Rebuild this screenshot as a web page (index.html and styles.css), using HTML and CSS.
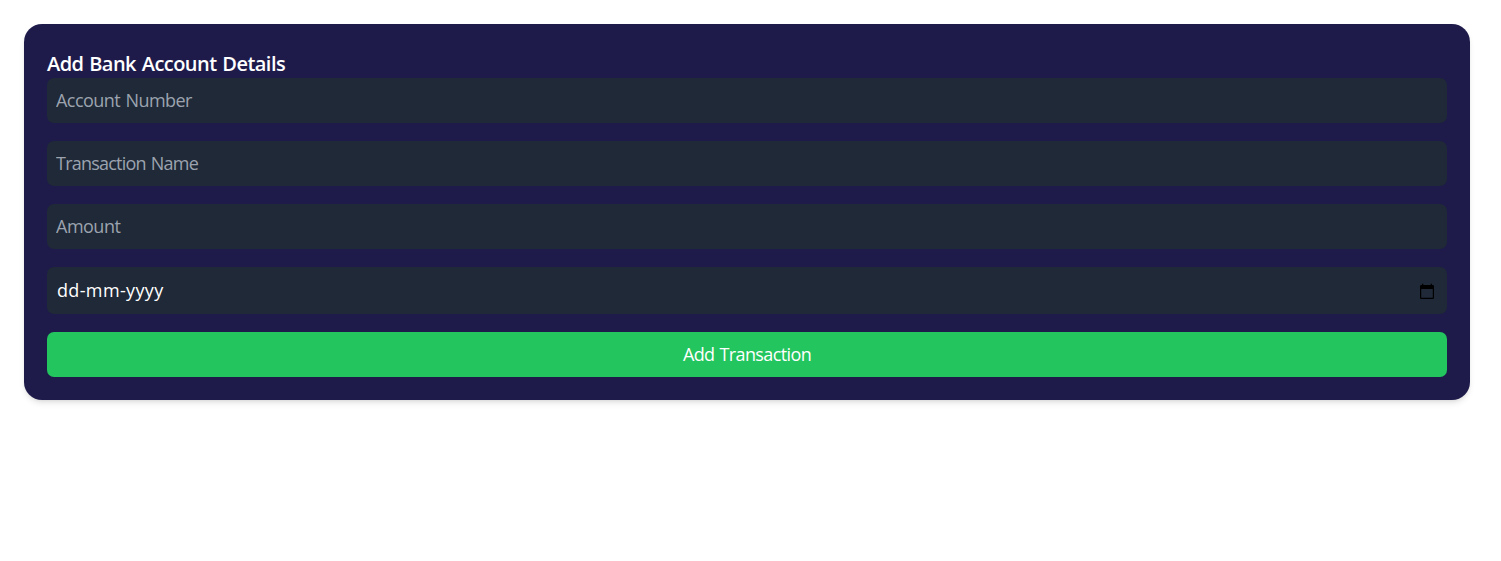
FILE: index.html
```html
<!DOCTYPE html>
<html lang="en">
<head>
<meta charset="utf-8">
<title>Add Bank Account Details</title>
<link rel="stylesheet" href="styles.css">
</head>
<body>
<form class="card">
  <h2 class="title"><span class="title-text">Add Bank Account Details</span></h2>
  <input class="field account" type="text" placeholder="Account Number">
  <input class="field name" type="text" placeholder="Transaction Name">
  <input class="field amount" type="text" placeholder="Amount">
  <div class="field date">
    <span class="date-text">dd-mm-yyyy</span>
    <svg class="calendar" viewBox="0 0 18 18" aria-hidden="true">
      <path fill="#000" fill-rule="evenodd" d="M4 .7h1.3V2h7.4V.7H14V2h.8a1.2 1.2 0 0 1 1.2 1.2v11.6a1.2 1.2 0 0 1-1.2 1.2H3.2A1.2 1.2 0 0 1 2 14.8V3.2A1.2 1.2 0 0 1 3.2 2H4zM3.2 6v8.800h11.600V6z"/>
    </svg>
  </div>
  <button class="submit" type="button">Add Transaction</button>
</form>
</body>
</html>
```
FILE: styles.css
```css
* {
  box-sizing: border-box;
}

body {
  margin: 0;
  padding: 24px 31px 24px 24px;
  background: #fff;
  font-family: "Segoe UI", "Open Sans", "Noto Sans", sans-serif;
  font-size: 18px;
}

.card {
  display: flex;
  flex-direction: column;
  gap: 18px;
  height: 376px;
  padding: 26px 23px 23px;
  border-radius: 18px;
  background: #1e1b4b;
  box-shadow: 0 4px 6px -1px rgba(0, 0, 0, 0.1), 0 2px 4px -2px rgba(0, 0, 0, 0.1);
}

.title {
  height: 28px;
  margin: 0 0 -18px;
  color: #fff;
  font-size: 20px;
  font-weight: 600;
  line-height: 28px;
  letter-spacing: -0.53px;
  word-spacing: 1px;
}

.field {
  width: 100%;
  height: 45px;
  padding: 0 9px 2px;
  border: 0;
  border-radius: 7px;
  background: #1f2937;
  color: #fff;
  font: inherit;
}

.field::placeholder {
  color: #9ca3af;
  opacity: 1;
}

.account {
  letter-spacing: -0.53px;
  word-spacing: 1px;
}

.name {
  letter-spacing: -0.77px;
  word-spacing: 1px;
}

.amount {
  letter-spacing: -0.5px;
}

.date {
  display: flex;
  align-items: center;
  justify-content: space-between;
  height: 47px;
  padding: 0 11px 1px 10px;
}

.date-text {
  letter-spacing: 0.35px;
}

.calendar {
  width: 18px;
  height: 18px;
  margin-top: 3px;
}

.submit {
  height: 45px;
  padding: 0 0 2px;
  border: 0;
  border-radius: 7px;
  background: #22c55e;
  color: #fff;
  font: inherit;
  letter-spacing: -0.62px;
  word-spacing: 1px;
}
```
